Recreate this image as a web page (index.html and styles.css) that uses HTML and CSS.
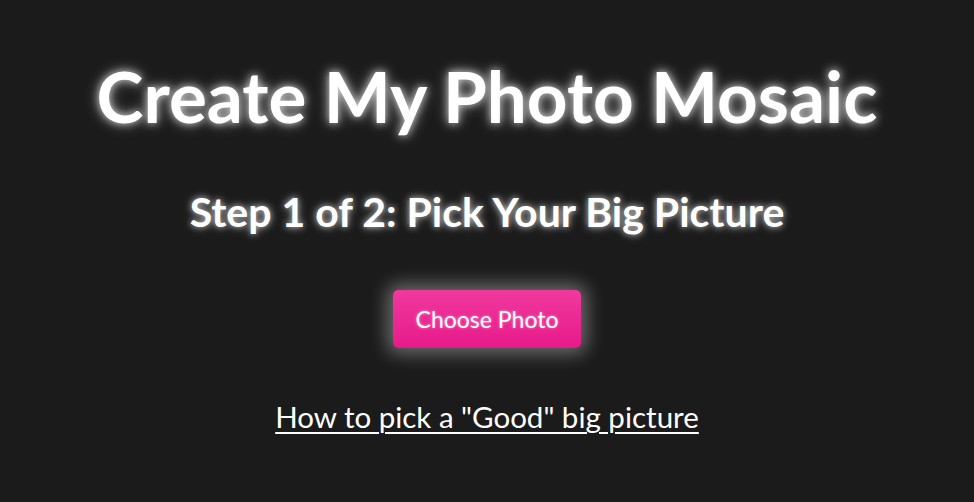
FILE: index.html
```html
<!DOCTYPE html>
<html>
<head>
<meta charset="utf-8">
<link rel="stylesheet" href="styles.css">
</head>
<body>
<main class="page">
  <h1 class="title">Create My Photo Mosaic</h1>
  <h2 class="step">Step 1 of 2: Pick Your Big Picture</h2>
  <button class="choose">Choose Photo</button>
  <a class="help" href="#">How to pick a "Good" big picture</a>
</main>
</body>
</html>
```
FILE: styles.css
```css
html, body {
  margin: 0;
  padding: 0;
  background: #1c1b1b;
  height: 100%;
}
.page {
  display: flex;
  flex-direction: column;
  align-items: center;
  font-family: Lato, "Open Sans", sans-serif;
  color: #fff;
  padding-top: 53px;
}
.title {
  margin: 0;
  font-size: 71px;
  font-weight: 700;
  line-height: 86px;
  text-shadow: 0 0 8px rgba(255,255,255,0.8), 0 0 16px rgba(255,255,255,0.4);
}
.step {
  margin: 48px 0 0;
  font-size: 41px;
  font-weight: 700;
  line-height: 50px;
  text-shadow: 0 0 6px rgba(255,255,255,0.7), 0 0 12px rgba(255,255,255,0.3);
}
.choose {
  margin-top: 53px;
  width: 188px;
  height: 58px;
  border: none;
  border-radius: 5px;
  background: linear-gradient(#f0399d, #e71a8a);
  color: #fff;
  font-family: Lato, sans-serif;
  font-size: 23px;
  font-weight: 400;
  box-shadow: 0 0 18px 6px rgba(255,255,255,0.35);
  text-shadow: 0 0 3px rgba(255,255,255,0.5);
}
.help {
  margin-top: 51px;
  color: #fff;
  font-size: 29.5px;
  text-decoration: underline;
  text-underline-offset: 4px;
  text-decoration-thickness: 2px;
}
```
